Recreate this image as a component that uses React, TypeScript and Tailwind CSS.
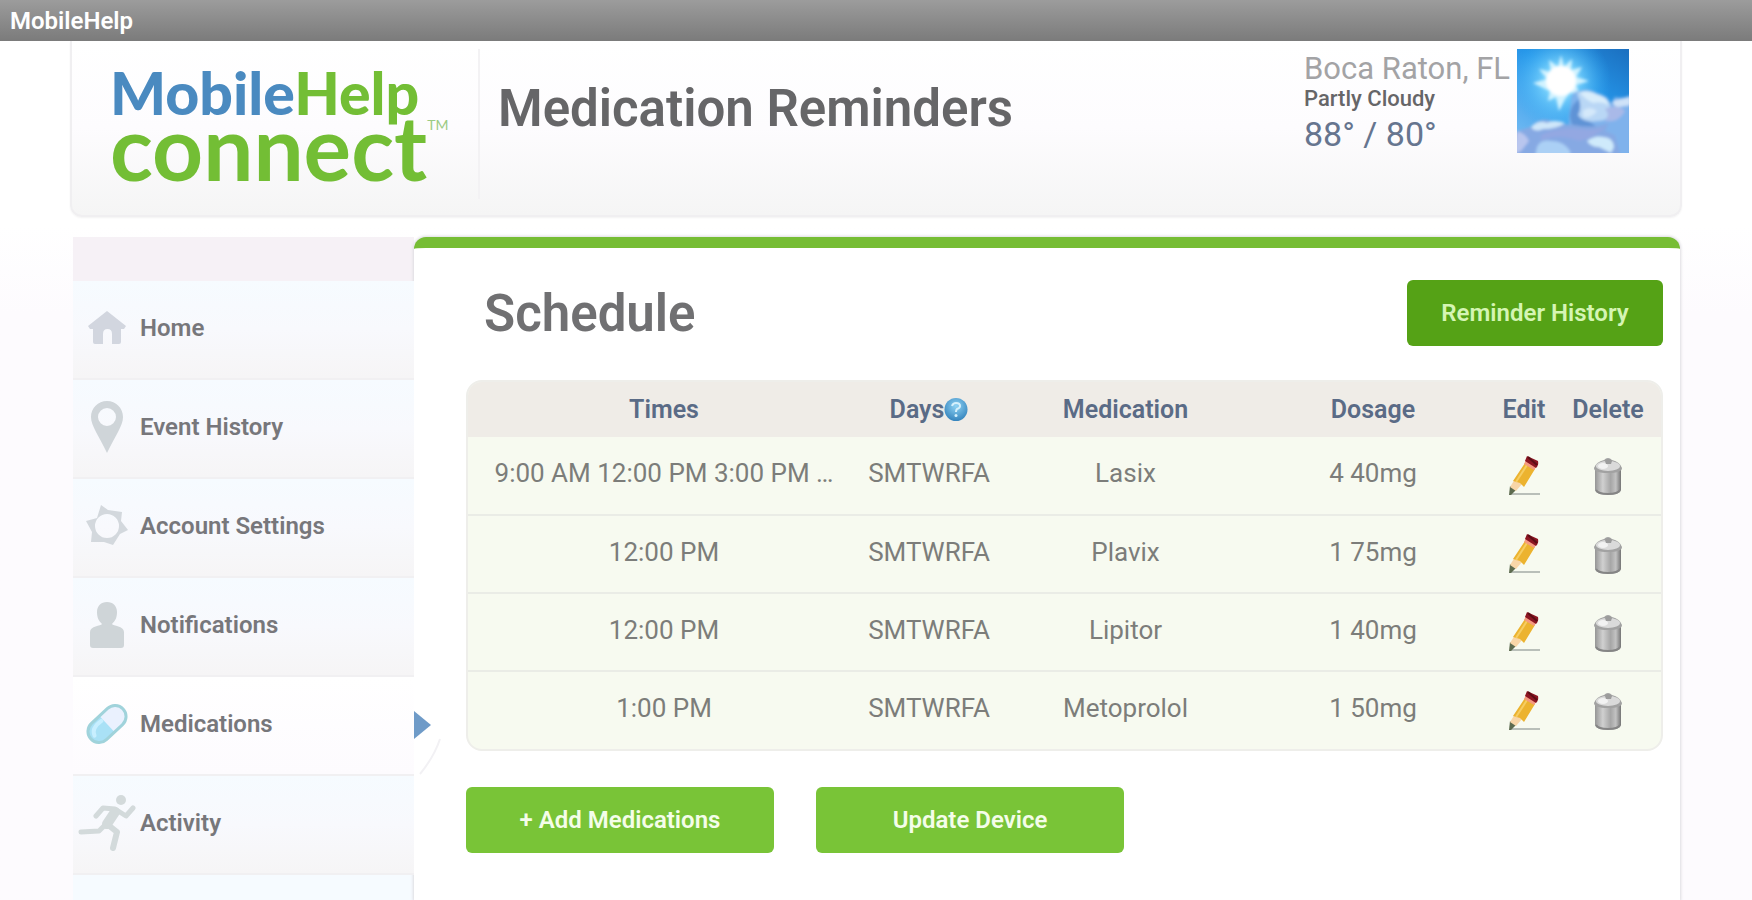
import { useState } from 'react'
import type { ReactNode } from 'react'

// ── Icons ─────────────────────────────────────────────────────────────────────

function HomeIcon() {
  return (
    <svg width="38" height="34" viewBox="0 0 38 34" fill="#d2d6df" aria-hidden="true">
      <path d="M19 0L38 15L36 18H33V31Q33 33 31 33H24V23Q24 18 19.500 18Q15 18 15 23V33H7Q5 33 5 31V18H2L0 15Z" />
    </svg>
  )
}

function PinIcon() {
  return (
    <svg width="32" height="52" viewBox="0 0 32 52" fill="#cfd5d9" aria-hidden="true">
      <path
        fillRule="evenodd"
        d="M16 0C25 0 32 7 32 16C32 25 24 35 16 52C8 35 0 25 0 16C0 7 7 0 16 0ZM16 7A9 9 0 1 0 16 25A9 9 0 1 0 16 7Z"
      />
    </svg>
  )
}

function GearIcon() {
  return (
    <svg width="42" height="42" viewBox="0 0 42 42" fill="#d3d8dd" aria-hidden="true">
      <path
        fillRule="evenodd"
        d="M15 0L22 5L36 7L35 16L42 25L34 29L27 40L18 37L5 37L6 27L0 16L11 13ZM21 9A12 12 0 1 0 21 33A12 12 0 1 0 21 9Z"
      />
    </svg>
  )
}

function PersonIcon() {
  return (
    <svg width="34" height="46" viewBox="0 0 34 46" fill="#cfd5d8" aria-hidden="true">
      <path d="M17 0C23 0 27 4 27 10C27 16 25 19 22 22C23 24 34 24 34 30V43Q34 46 31 46H3Q0 46 0 43V30C0 24 11 24 12 22C9 19 7 16 7 10C7 4 11 0 17 0Z" />
    </svg>
  )
}

function PillIcon() {
  return (
    <svg width="42" height="40" viewBox="0 0 42 40" aria-hidden="true">
      <g transform="rotate(-43 21 20)">
        <rect x="-1" y="9" width="44" height="22" rx="11" fill="#eaf1fe" />
        <path d="M21 9H10A11 11 0 0 0 10 31H21Z" fill="#a9e1f6" />
        <path d="M4 20C6 14 12 13 19 14" fill="none" stroke="#c8efff" strokeWidth="4" strokeLinecap="round" />
        <rect x="-1" y="9" width="44" height="22" rx="11" fill="none" stroke="#a0d3db" strokeWidth="3" />
      </g>
    </svg>
  )
}

function RunnerIcon() {
  return (
    <svg width="58" height="56" viewBox="0 0 58 56" aria-hidden="true">
      <g fill="none" stroke="#d3dadb" strokeWidth="5" strokeLinecap="round" strokeLinejoin="round">
        <path d="M18 21L25 13L37 14L48 21L55 13" />
        <path d="M29 28L21 36L3 37" />
        <path d="M29 29L39 37L35 53" strokeWidth="6" />
        <path d="M37 17L29 29" strokeWidth="10" />
      </g>
      <circle cx="43" cy="5" r="5" fill="#d3dadb" />
    </svg>
  )
}

function PencilIcon() {
  return (
    <svg width="34" height="42" viewBox="0 0 34 42" aria-hidden="true">
      <path d="M3 39H33" stroke="#b9bfb9" strokeWidth="2" />
      <path d="M2 40L3 31L9 35L4 40Z" fill="#5d6b4f" />
      <path d="M3 32L8 24L15 29L9 36Z" fill="#f8d6a8" />
      <path d="M6 26L18 8L28 14L17 32L13 28Z" fill="#ecb32f" />
      <path d="M9 27L20 10" stroke="#f6cd62" strokeWidth="2" />
      <path d="M17 9L19 5L30 11L27 15Z" fill="#f59a80" />
      <path d="M20 1L31 6Q32 10 29 13L18 6Z" fill="#8c1522" />
      <path d="M21 2L30 10" stroke="#5c0d16" strokeWidth="2" />
    </svg>
  )
}

function TrashIcon() {
  return (
    <svg width="30" height="40" viewBox="0 0 30 40" aria-hidden="true">
      <defs>
        <linearGradient id="bin" x1="0" x2="1">
          <stop offset="0" stopColor="#959595" />
          <stop offset=".3" stopColor="#d0d0d0" />
          <stop offset=".6" stopColor="#a6a6a6" />
          <stop offset=".8" stopColor="#c2c2c2" />
          <stop offset="1" stopColor="#757575" />
        </linearGradient>
      </defs>
      <path d="M2 13V34Q3 39 15 39Q27 39 28 34V13Z" fill="url(#bin)" />
      <path d="M3 34Q5 38 15 38Q25 38 27 34" fill="none" stroke="#858585" strokeWidth="2" />
      <path d="M1 12Q3 6 11 4Q15 0 19 4Q27 6 29 12Q29 17 15 17Q1 17 1 12Z" fill="#a2a2a2" />
      <ellipse cx="15" cy="10" rx="12" ry="5" fill="#dadada" />
      <ellipse cx="10" cy="10" rx="5" ry="3" fill="#f2f2f2" />
      <path d="M12 5Q15 1 19 5L18 8H13Z" fill="#9c9c9c" />
    </svg>
  )
}

function HelpIcon() {
  return (
    <svg width="24" height="25" viewBox="0 0 24 25" aria-hidden="true">
      <defs>
        <radialGradient id="help" cx=".5" cy=".35" r=".65">
          <stop offset="0" stopColor="#8fd3f4" />
          <stop offset="1" stopColor="#3584bd" />
        </radialGradient>
      </defs>
      <circle cx="12" cy="12.500" r="11.500" fill="url(#help)" />
      <path d="M8 9Q9 6 12 6Q16 6 16 9Q16 11 13 12Q12 13 12 15" fill="none" stroke="#d5f0fc" strokeWidth="2" />
      <circle cx="12" cy="18.500" r="1.500" fill="#d5f0fc" />
    </svg>
  )
}

function WeatherPicture() {
  return (
    <svg width="112" height="104" viewBox="0 0 112 104" role="img" aria-label="Partly Cloudy" className="shrink-0">
      <defs>
        <linearGradient id="sky" x1="1" y1="0" x2=".3" y2="1">
          <stop offset="0" stopColor="#1b6fbf" />
          <stop offset=".45" stopColor="#2595e8" />
          <stop offset="1" stopColor="#6db8f2" />
        </linearGradient>
        <radialGradient id="glow" cx="44" cy="32" r="50" gradientUnits="userSpaceOnUse">
          <stop offset="0" stopColor="#ffffff" />
          <stop offset=".3" stopColor="#86dbff" stopOpacity=".9" />
          <stop offset="1" stopColor="#35b1f8" stopOpacity="0" />
        </radialGradient>
        <filter id="soft">
          <feGaussianBlur stdDeviation="1.500" />
        </filter>
        <clipPath id="frame">
          <rect width="112" height="104" />
        </clipPath>
      </defs>
      <g clipPath="url(#frame)">
        <rect width="112" height="104" fill="url(#sky)" />
        <rect width="112" height="104" fill="url(#glow)" />
        <g filter="url(#soft)">
          <path
            d="M44 6L47 18L55 10L54 21L65 18L59 28L72 32L59 36L63 46L53 43L48 50L42 62L39 48L31 52L33 42L16 34L30 30L22 20L34 23L32 11L41 18Z"
            fill="#d2f3ff"
          />
          <circle cx="44" cy="32" r="15" fill="#ffffff" />
          {/* right-hand cloud bank */}
          <path d="M54 52Q54 42 62 42Q70 38 80 44Q90 46 94 54L98 48Q106 50 114 46V106H52V68Z" fill="#7fb2ec" />
          <path d="M56 56L64 48L66 68L80 78H56Q50 66 56 56Z" fill="#5f93d6" />
          <path d="M60 44Q68 39 80 45Q93 48 94 62Q92 72 80 72Q66 74 61 66Q66 58 60 44Z" fill="#b9d7f5" />
          <path d="M63 44Q70 40 80 46Q90 48 92 56Q84 52 76 54Q68 50 63 44Z" fill="#d9edfb" />
          <path d="M66 62Q72 56 80 62Q74 70 66 68Z" fill="#d4e8fa" />
          <path d="M96 52Q104 50 114 48V56L102 58Q96 58 96 52Z" fill="#cfe2f8" />
          <path d="M88 60Q100 54 108 62Q102 74 88 72Q94 66 88 60Z" fill="#a9b9e8" />
          {/* clouds along the bottom */}
          <path d="M-4 84Q6 80 14 78Q22 68 34 72Q46 76 58 76Q76 80 92 74L88 82L98 86L104 108H-4Z" fill="#86a9e3" />
          <path d="M14 78Q22 70 30 74Q36 70 48 74Q40 80 26 80Q18 84 14 78Z" fill="#cfe7fa" />
          <path d="M24 86Q40 78 64 80Q78 82 88 78Q76 90 62 92Q40 84 24 92Z" fill="#93a8e2" />
          <path d="M0 82Q8 84 12 92L4 102L-4 106Z" fill="#b9c6ee" />
          <path d="M20 98Q24 90 34 92Q48 92 54 104L50 108H18Z" fill="#abd0f5" />
          <path d="M70 92Q78 86 86 88Q96 88 97 98L94 104L82 98Q74 98 70 92Z" fill="#cfeafb" />
        </g>
      </g>
    </svg>
  )
}

// Blue pointer of the active entry, with the edge of the white tab that it sits on
function ActivePointer() {
  return (
    <svg
      width="30"
      height="98"
      viewBox="0 0 30 98"
      aria-hidden="true"
      className="absolute left-full top-0"
    >
      <path d="M-4 0H4L28 50V62L8 97H-4Z" fill="#ffffff" />
      <path d="M26 62Q20 80 6 97" fill="none" stroke="#f2f1f4" strokeWidth="2" />
      <path d="M0 34L17 48L0 62Z" fill="#6f9bc8" />
    </svg>
  )
}

// ── Data ──────────────────────────────────────────────────────────────────────

const NAV_ITEMS: { label: string; icon: ReactNode }[] = [
  { label: 'Home',             icon: <HomeIcon /> },
  { label: 'Event History',    icon: <PinIcon /> },
  { label: 'Account Settings', icon: <GearIcon /> },
  { label: 'Notifications',    icon: <PersonIcon /> },
  { label: 'Medications',      icon: <PillIcon /> },
  { label: 'Activity',         icon: <RunnerIcon /> },
]

const REMINDERS = [
  { times: '9:00 AM 12:00 PM 3:00 PM …', days: 'SMTWRFA', medication: 'Lasix',      dosage: '4 40mg' },
  { times: '12:00 PM',                   days: 'SMTWRFA', medication: 'Plavix',     dosage: '1 75mg' },
  { times: '12:00 PM',                   days: 'SMTWRFA', medication: 'Lipitor',    dosage: '1 40mg' },
  { times: '1:00 PM',                    days: 'SMTWRFA', medication: 'Metoprolol', dosage: '1 50mg' },
]

// ── Layout parts ──────────────────────────────────────────────────────────────

function Header() {
  return (
    <header
      className="flex rounded-b-xl border-2 border-t-0 border-[#f0eff1]
        bg-linear-to-b from-white via-[#fdfcfe] to-[#f5f5f5] pt-2 pb-4 shadow-xs"
    >
      <div className="flex h-[150px] w-[408px] shrink-0 items-start border-r-2 border-[#f3f2f4] pt-3 pl-[38px]">
        <div className="font-['Lato'] font-bold">
          <div className="text-[59px] leading-[64px] font-black text-[#4a8ac0]">
            Mobile<span className="text-[#73be35]">Help</span>
          </div>
          <div className="flex text-[89px] leading-[44px] text-[#73be35]">
            connect
            <span className="-mt-2 text-sm leading-4 font-normal text-[#9ccb83]">TM</span>
          </div>
        </div>
      </div>
      <h1 className="flex-1 pt-7 pl-[18px] text-[51px] leading-[64px] font-semibold text-[#666668]">
        Medication Reminders
      </h1>
      <div className="flex pr-[51px]">
        <div className="w-[213px] pt-1">
          <p className="text-[31px] leading-8 text-[#a3a3a5]">Boca Raton, FL</p>
          <p className="text-[22px] leading-7 font-medium text-[#666668]">Partly Cloudy</p>
          <p className="text-[34px] leading-[42px] text-[#66758f]">88° / 80°</p>
        </div>
        <WeatherPicture />
      </div>
    </header>
  )
}

function SideNav({ active, onSelect }: { active: string; onSelect: (label: string) => void }) {
  return (
    <nav aria-label="Main" className="flex w-[341px] shrink-0 flex-col">
      <div className="h-11 bg-[#f6f1f6]" />
      <ul>
        {NAV_ITEMS.map(item => (
          <li key={item.label} className="relative">
            <a
              href="#"
              onClick={e => { e.preventDefault(); onSelect(item.label) }}
              aria-current={item.label === active ? 'page' : undefined}
              className={`flex h-[99px] items-center border-b-2 border-[#f1f0f2] pb-1 text-2xl font-semibold text-[#77777b]
                ${item.label === active
                  ? 'bg-linear-to-b from-white to-[#fdfbfe]'
                  : 'bg-linear-to-b from-[#f6fbff] via-[#f8f9fd] to-[#f6f5f6]'
                }`}
            >
              <span className="flex w-[67px] shrink-0 justify-center">{item.icon}</span>
              {item.label}
            </a>
            {item.label === active && <ActivePointer />}
          </li>
        ))}
      </ul>
      <div className="flex-1 bg-[#f6fbff]" />
    </nav>
  )
}

function ReminderTable() {
  return (
    <div className="overflow-hidden rounded-2xl border-2 border-[#eeeeea] bg-[#f7faf0]">
      <table className="w-full table-fixed text-center text-[26px]">
        <colgroup>
          <col className="w-[392px]" />
          <col className="w-[138px]" />
          <col />
          <col className="w-[240px]" />
          <col className="w-[62px]" />
          <col className="w-[106px]" />
        </colgroup>
        <thead className="bg-[#efece7] text-[25px] text-[#5a6b86]">
          <tr className="h-[55px]">
            <th className="font-semibold">Times</th>
            <th className="font-semibold">
              <span className="flex items-center justify-center">
                Days
                <button type="button" aria-label="About days"><HelpIcon /></button>
              </span>
            </th>
            <th className="font-semibold">Medication</th>
            <th className="font-semibold">Dosage</th>
            <th className="font-semibold">Edit</th>
            <th className="font-semibold">Delete</th>
          </tr>
        </thead>
        <tbody className="divide-y-2 divide-[#eaece6] text-[#7c7d7a]">
          {REMINDERS.map((row, i) => (
            <tr key={i} className="h-[78px]">
              <td className="pb-1">{row.times}</td>
              <td className="pb-1">{row.days}</td>
              <td className="pb-1">{row.medication}</td>
              <td className="pb-1">{row.dosage}</td>
              <td>
                <button type="button" aria-label={`Edit ${row.medication}`} className="align-middle">
                  <PencilIcon />
                </button>
              </td>
              <td>
                <button type="button" aria-label={`Delete ${row.medication}`} className="align-middle">
                  <TrashIcon />
                </button>
              </td>
            </tr>
          ))}
        </tbody>
      </table>
    </div>
  )
}

// ── Page ──────────────────────────────────────────────────────────────────────

export default function App() {
  const [active, setActive] = useState('Medications')

  return (
    <div className="flex h-screen flex-col overflow-hidden bg-linear-to-b from-white from-25% to-[#fdfbfe] to-35% font-['Roboto',sans-serif]">
      <div className="flex h-[41px] shrink-0 items-center bg-linear-to-b from-[#9c9c9c] to-[#7b7b7b] px-2.5 text-2xl font-semibold text-white">
        MobileHelp
      </div>

      <div className="flex flex-1 flex-col px-[70px]">
        <Header />

        <div className="mt-5 flex flex-1 pr-[2px] pl-[3px]">
          <SideNav active={active} onSelect={setActive} />

          <main className="flex-1 rounded-t-xl border-t-11 border-[#76bd34] bg-white shadow-[0_0_3px_1px_#dddce0]">
            <div className="pr-[17px] pl-[52px]">
              <div className="flex items-start justify-between pt-8">
                <h2 className="pl-[18px] text-[51px] leading-[68px] font-semibold text-[#707072]">Schedule</h2>
                <button
                  type="button"
                  className="h-[66px] w-64 rounded-md bg-[#55a216] text-2xl font-semibold text-[#d5f5b4]"
                >
                  Reminder History
                </button>
              </div>

              <div className="mt-8">
                <ReminderTable />
              </div>

              <div className="mt-9 flex gap-[42px]">
                <button type="button" className="h-[66px] w-[308px] rounded-md bg-[#79c437] text-2xl font-semibold text-[#f4fde9]">
                  + Add Medications
                </button>
                <button type="button" className="h-[66px] w-[308px] rounded-md bg-[#79c437] text-2xl font-semibold text-[#f4fde9]">
                  Update Device
                </button>
              </div>
            </div>
          </main>
        </div>
      </div>
    </div>
  )
}
